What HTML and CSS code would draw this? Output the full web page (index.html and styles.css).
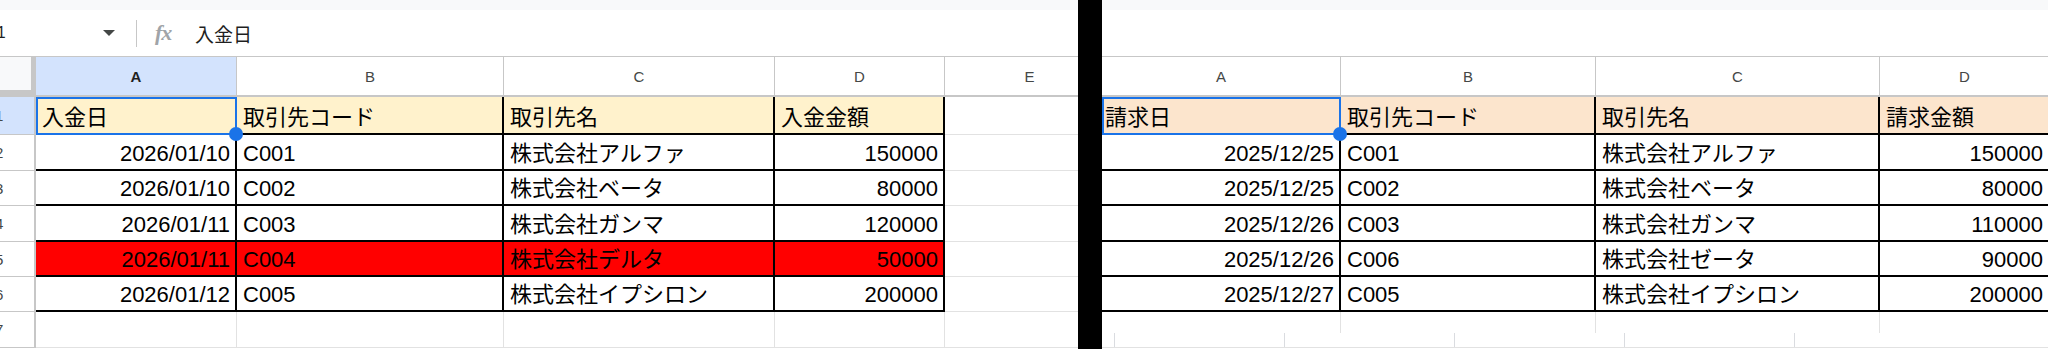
FILE: index.html
```html
<!DOCTYPE html>
<html lang="ja">
<head>
<meta charset="utf-8">
<title>Sheets</title>
<link rel="stylesheet" href="styles.css">
</head>
<body>
<div class="app">
  <section class="pane pane-left">
    <div class="topstrip"></div>
    <div class="fbar">
      <span class="nb-text">A1</span>
      <span class="caret"></span>
      <span class="fdiv"></span>
      <span class="fx">fx</span>
      <span class="ftext">入金日</span>
    </div>
    <div class="grid grid-left">
      <div class="corner"></div>
      <div class="ch on">A</div>
      <div class="ch">B</div>
      <div class="ch">C</div>
      <div class="ch">D</div>
      <div class="ch">E</div>

      <div class="rh on"><span>1</span></div>
      <div class="c d hy sel">入金日<i class="dot"></i></div>
      <div class="c d hy">取引先コード</div>
      <div class="c d hy">取引先名</div>
      <div class="c d hy">入金金額</div>
      <div class="c"></div>

      <div class="rh"><span>2</span></div>
      <div class="c d num">2026/01/10</div>
      <div class="c d">C001</div>
      <div class="c d">株式会社アルファ</div>
      <div class="c d num">150000</div>
      <div class="c"></div>

      <div class="rh"><span>3</span></div>
      <div class="c d num">2026/01/10</div>
      <div class="c d">C002</div>
      <div class="c d">株式会社ベータ</div>
      <div class="c d num">80000</div>
      <div class="c"></div>

      <div class="rh"><span>4</span></div>
      <div class="c d num">2026/01/11</div>
      <div class="c d">C003</div>
      <div class="c d">株式会社ガンマ</div>
      <div class="c d num">120000</div>
      <div class="c"></div>

      <div class="rh"><span>5</span></div>
      <div class="c d num red">2026/01/11</div>
      <div class="c d red">C004</div>
      <div class="c d red">株式会社デルタ</div>
      <div class="c d num red">50000</div>
      <div class="c"></div>

      <div class="rh"><span>6</span></div>
      <div class="c d num">2026/01/12</div>
      <div class="c d">C005</div>
      <div class="c d">株式会社イプシロン</div>
      <div class="c d num">200000</div>
      <div class="c"></div>

      <div class="rh"><span>7</span></div>
      <div class="c"></div>
      <div class="c"></div>
      <div class="c"></div>
      <div class="c"></div>
      <div class="c"></div>
    </div>
  </section>

  <div class="split"></div>

  <section class="pane pane-right">
    <div class="topstrip"></div>
    <div class="fbar"></div>
    <div class="grid grid-right">
      <div class="ch">A</div>
      <div class="ch">B</div>
      <div class="ch">C</div>
      <div class="ch">D</div>

      <div class="c d ho sel first">請求日<i class="dot"></i></div>
      <div class="c d ho">取引先コード</div>
      <div class="c d ho">取引先名</div>
      <div class="c d ho">請求金額</div>

      <div class="c d num">2025/12/25</div>
      <div class="c d">C001</div>
      <div class="c d">株式会社アルファ</div>
      <div class="c d num">150000</div>

      <div class="c d num">2025/12/25</div>
      <div class="c d">C002</div>
      <div class="c d">株式会社ベータ</div>
      <div class="c d num">80000</div>

      <div class="c d num">2025/12/26</div>
      <div class="c d">C003</div>
      <div class="c d">株式会社ガンマ</div>
      <div class="c d num">110000</div>

      <div class="c d num">2025/12/26</div>
      <div class="c d">C006</div>
      <div class="c d">株式会社ゼータ</div>
      <div class="c d num">90000</div>

      <div class="c d num">2025/12/27</div>
      <div class="c d">C005</div>
      <div class="c d">株式会社イプシロン</div>
      <div class="c d num">200000</div>

      <div class="c last"></div>
      <div class="c last"></div>
      <div class="c last"></div>
      <div class="c last"></div>
    </div>
    <div class="strip">
      <span class="s0"></span>
      <span class="sc"></span>
      <span class="sc"></span>
      <span class="sc"></span>
      <span class="sc"></span>
      <span class="sc"></span>
    </div>
  </section>
</div>
</body>
</html>
```

FILE: styles.css
```css
* { box-sizing: border-box; }
html, body { margin: 0; padding: 0; }
body {
  width: 2048px;
  height: 349px;
  overflow: hidden;
  background: #fff;
  font-family: "Liberation Sans", "Noto Sans CJK JP", sans-serif;
  color: #000;
}
.app { display: flex; height: 349px; }
.pane {
  display: flex;
  flex-direction: column;
  overflow: hidden;
  background: #fff;
}
.pane-left { width: 1078px; flex: none; }
.split { width: 24px; flex: none; background: #000; }
.pane-right { flex: 1; min-width: 0; }

.topstrip { height: 10px; flex: none; background: #f8f9fa; }

.fbar {
  height: 47px;
  flex: none;
  display: flex;
  align-items: center;
  border-bottom: 1px solid #c7c7c7;
  white-space: nowrap;
}
.nb-text {
  flex: none;
  width: 117px;
  margin-left: -14px;
  font-size: 16px;
  color: #1f1f1f;
}
.caret {
  flex: none;
  width: 0; height: 0;
  border-left: 6px solid transparent;
  border-right: 6px solid transparent;
  border-top: 6px solid #444746;
}
.fdiv {
  flex: none;
  width: 1px;
  height: 27px;
  margin-left: 21px;
  background: #c7c7c7;
}
.fx {
  flex: none;
  margin-left: 18px;
  width: 24px;
  font-family: "Liberation Serif", serif;
  font-style: italic;
  font-weight: bold;
  font-size: 22px;
  color: #a0a4a8;
  letter-spacing: -1px;
}
.ftext {
  margin-left: 16px;
  font-size: 19px;
  color: #1f1f1f;
}

.grid { display: grid; flex: none; }
.grid-left {
  grid-template-columns: 36px 201px 267px 271px 170px 170px;
  grid-template-rows: 40px 38px 36px 35px 36px 35px 35px 36px;
}
.grid-right {
  grid-template-columns: 239px 255px 284px 170px;
  grid-template-rows: 40px 38px 36px 35px 36px 35px 35px 21px;
}

.corner {
  background: #f8f9fa;
  border-right: 5px solid #c7c7c7;
  border-bottom: 7px solid #c7c7c7;
}
.ch {
  display: flex;
  align-items: center;
  justify-content: center;
  font-size: 15px;
  color: #444746;
  border-right: 1px solid #c7c7c7;
  border-bottom: 2px solid #c7c7c7;
  background: #fff;
}
.ch.on { background: #d3e3fd; color: #1f1f1f; font-weight: bold; }

.rh {
  display: flex;
  align-items: center;
  overflow: hidden;
  font-size: 15px;
  color: #444746;
  border-right: 2px solid #c7c7c7;
  border-bottom: 1px solid #c7c7c7;
  background: #fff;
}
.rh span { margin-left: -5px; }
.rh.on { background: #d3e3fd; }

.c {
  display: flex;
  align-items: flex-end;
  padding: 0 5px 3px 6px;
  font-size: 22px;
  line-height: 25px;
  white-space: nowrap;
  overflow: hidden;
  border-right: 1px solid #e2e2e2;
  border-bottom: 1px solid #e2e2e2;
}
.c.d {
  border-right: 2px solid #000;
  border-bottom: 2px solid #000;
}
.c.num { justify-content: flex-end; }
.c.first { padding-left: 3px; }
.c.last { border-bottom: none; }
.hy { background: #fff2cc; }
.ho { background: #fce5cd; }
.red { background: #ff0000; }

.c.sel {
  position: relative;
  overflow: visible;
  border-right-color: #1a73e8;
  border-bottom-color: #1a73e8;
  box-shadow: inset 2px 2px 0 0 #1a73e8;
}
.dot {
  position: absolute;
  right: -8px;
  bottom: -8px;
  width: 14px;
  height: 14px;
  border-radius: 50%;
  background: #1a73e8;
  z-index: 2;
}

.strip {
  flex: none;
  height: 15px;
  display: flex;
  border-bottom: 1px solid #e2e2e2;
}
.strip .s0 { flex: none; width: 12px; }
.strip .sc { flex: none; width: 170px; border-left: 1px solid #dadce0; }
```
